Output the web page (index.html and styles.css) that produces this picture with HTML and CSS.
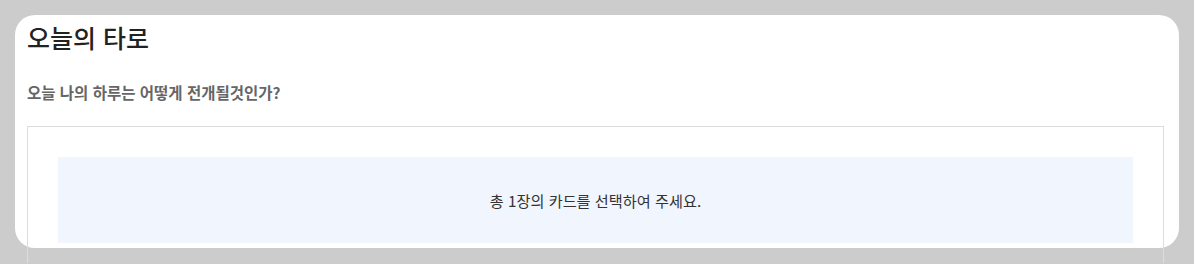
FILE: index.html
```html
<!DOCTYPE html>
<html lang="ko">
<head>
    <meta charset="UTF-8">
    <meta name="viewport" content="width=device-width, initial-scale=1.0">
    <link rel="stylesheet" href="styles.css">
</head>
<body>
    <div class="tarot-card">
        <h1 class="tarot-title">오늘의 타로</h1>
        <p class="tarot-question">오늘 나의 하루는 어떻게 전개될것인가?</p>

        <div class="tarot-board">
            <div class="tarot-guide">총 1장의 카드를 선택하여 주세요.</div>
        </div>
    </div>
</body>
</html>
```

FILE: styles.css
```css
body {
    margin: 0;
    background-color: #cccccc;
    font-family: "Noto Sans CJK KR", "Noto Sans", sans-serif;
}

.tarot-card {
    box-sizing: border-box;
    height: 233px;
    margin: 15px;
    padding: 6px 15px 0 12px;
    background-color: #fff;
    border-radius: 20px;
}

.tarot-title {
    margin: 0;
    font-size: 25px;
    font-weight: 500;
    line-height: 1.3;
    color: #222;
}

.tarot-question {
    margin: 28px 0 0;
    font-size: 15.5px;
    font-weight: bold;
    line-height: 1.4;
    color: #666;
}

.tarot-board {
    margin-top: 23px;
    padding: 30px;
    border: 1px solid #dddddd;
}

.tarot-guide {
    display: flex;
    align-items: center;
    justify-content: center;
    height: 86px;
    background-color: #f1f5fe;
    font-size: 15.2px;
    color: #333;
}
```
